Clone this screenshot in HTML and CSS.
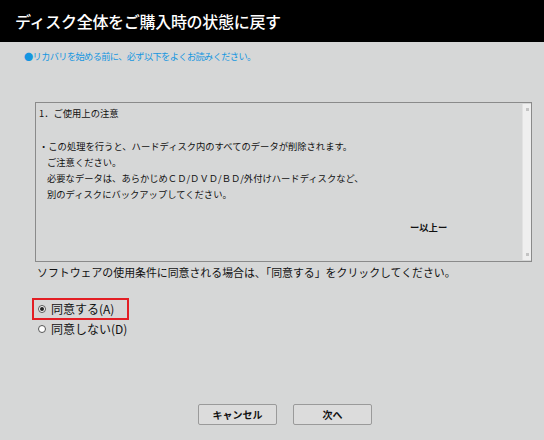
FILE: index.html
```html
<!DOCTYPE html>
<html lang="ja">
<head>
<meta charset="utf-8">
<title>ディスク全体をご購入時の状態に戻す</title>
<link rel="stylesheet" href="styles.css">
</head>
<body>
<div class="window">
  <header class="title-bar">
    <h1 class="title">ディスク全体をご購入時の状態に戻す</h1>
  </header>
  <p class="notice">●リカバリを始める前に、必ず以下をよくお読みください。</p>

  <div class="terms">
    <div class="terms-text">
      <p class="line">1．ご使用上の注意</p>
      <p class="line blank">&nbsp;</p>
      <p class="line">・この処理を行うと、ハードディスク内のすべてのデータが削除されます。</p>
      <p class="line indent">ご注意ください。</p>
      <p class="line indent">必要なデータは、あらかじめＣＤ/ＤＶＤ/ＢＤ/外付けハードディスクなど、</p>
      <p class="line indent">別のディスクにバックアップしてください。</p>
      <p class="line blank">&nbsp;</p>
      <p class="line end">ー以上ー</p>
    </div>
    <div class="scrollbar">
      <span class="arrow up"></span>
      <span class="arrow down"></span>
    </div>
  </div>

  <p class="agree-text">ソフトウェアの使用条件に同意される場合は、「同意する」をクリックしてください。</p>

  <div class="choices">
    <label class="choice selected"><span class="radio checked"></span>同意する(A)</label>
    <label class="choice"><span class="radio"></span>同意しない(D)</label>
  </div>

  <div class="buttons">
    <button class="btn" type="button">キャンセル</button>
    <button class="btn" type="button">次へ</button>
  </div>
</div>
</body>
</html>
```

FILE: styles.css
```css
* { box-sizing: border-box; }

html, body {
  margin: 0;
  padding: 0;
}

body {
  width: 544px;
  height: 440px;
  overflow: hidden;
  background: #d6d7d7;
  font-family: "Noto Sans CJK JP", "Noto Sans", sans-serif;
  color: #111;
}

.window {
  display: flex;
  flex-direction: column;
  height: 440px;
}

.title-bar {
  height: 42px;
  background: #000;
  display: flex;
  align-items: center;
  padding-left: 15px;
}

.title {
  margin: 0;
  color: #fff;
  font-size: 16px;
  font-weight: 500;
  letter-spacing: -0.3px;
  line-height: 20px;
}

.notice {
  margin: 8px 0 0 24px;
  font-size: 9.2px;
  line-height: 12px;
  color: #1596e0;
  letter-spacing: -0.6px;
}

.terms {
  margin: 40px 0 0 35px;
  width: 497px;
  height: 160px;
  border: 1px solid #8a8a8a;
  display: flex;
}

.terms-text {
  flex: 1;
  padding: 2px 0 0 3px;
}

.line {
  margin: 0;
  font-size: 9.3px;
  line-height: 16.3px;
  white-space: nowrap;
}

.line.indent { padding-left: 8px; }

.line.end {
  padding-left: 371px;
  font-weight: bold;
}

.scrollbar {
  width: 9px;
  margin: 1px 0 1px;
  background: #efefef;
  border-left: 1px solid #e2e2e2;
  display: flex;
  flex-direction: column;
  justify-content: space-between;
  align-items: center;
  padding: 4px 0;
}

.arrow {
  width: 3px;
  height: 3px;
  background: #c4c4c4;
}

.agree-text {
  margin: 3px 0 0 37px;
  font-size: 10.9px;
  line-height: 14px;
}

.choices {
  margin: 19px 0 0 32px;
  display: flex;
  flex-direction: column;
}

.choice {
  display: flex;
  align-items: center;
  gap: 5px;
  font-size: 12px;
  line-height: 14px;
  height: 22px;
  padding-left: 4px;
  width: 97px;
  border: 2px solid transparent;
  white-space: nowrap;
}

.choice + .choice {
  height: 14px;
  margin-top: 2px;
  border: 0;
  padding-left: 6px;
}

.choice.selected {
  border-color: #e31e24;
}

.radio {
  flex: none;
  width: 8px;
  height: 8px;
  border: 1px solid #555;
  border-radius: 50%;
  background: #fff;
  position: relative;
}

.radio.checked::after {
  content: "";
  position: absolute;
  left: 1px;
  top: 1px;
  width: 4px;
  height: 4px;
  border-radius: 50%;
  background: #222;
}

.buttons {
  margin: 68px 0 0 198px;
  display: flex;
  gap: 16px;
}

.btn {
  width: 79px;
  height: 21px;
  border: 1px solid #9a9a9a;
  border-radius: 2px;
  background: #dcdcdc;
  font-family: "Noto Sans CJK JP", "Noto Sans", sans-serif;
  font-size: 10px;
  font-weight: bold;
  color: #111;
  padding: 0;
  line-height: 19px;
}
```
